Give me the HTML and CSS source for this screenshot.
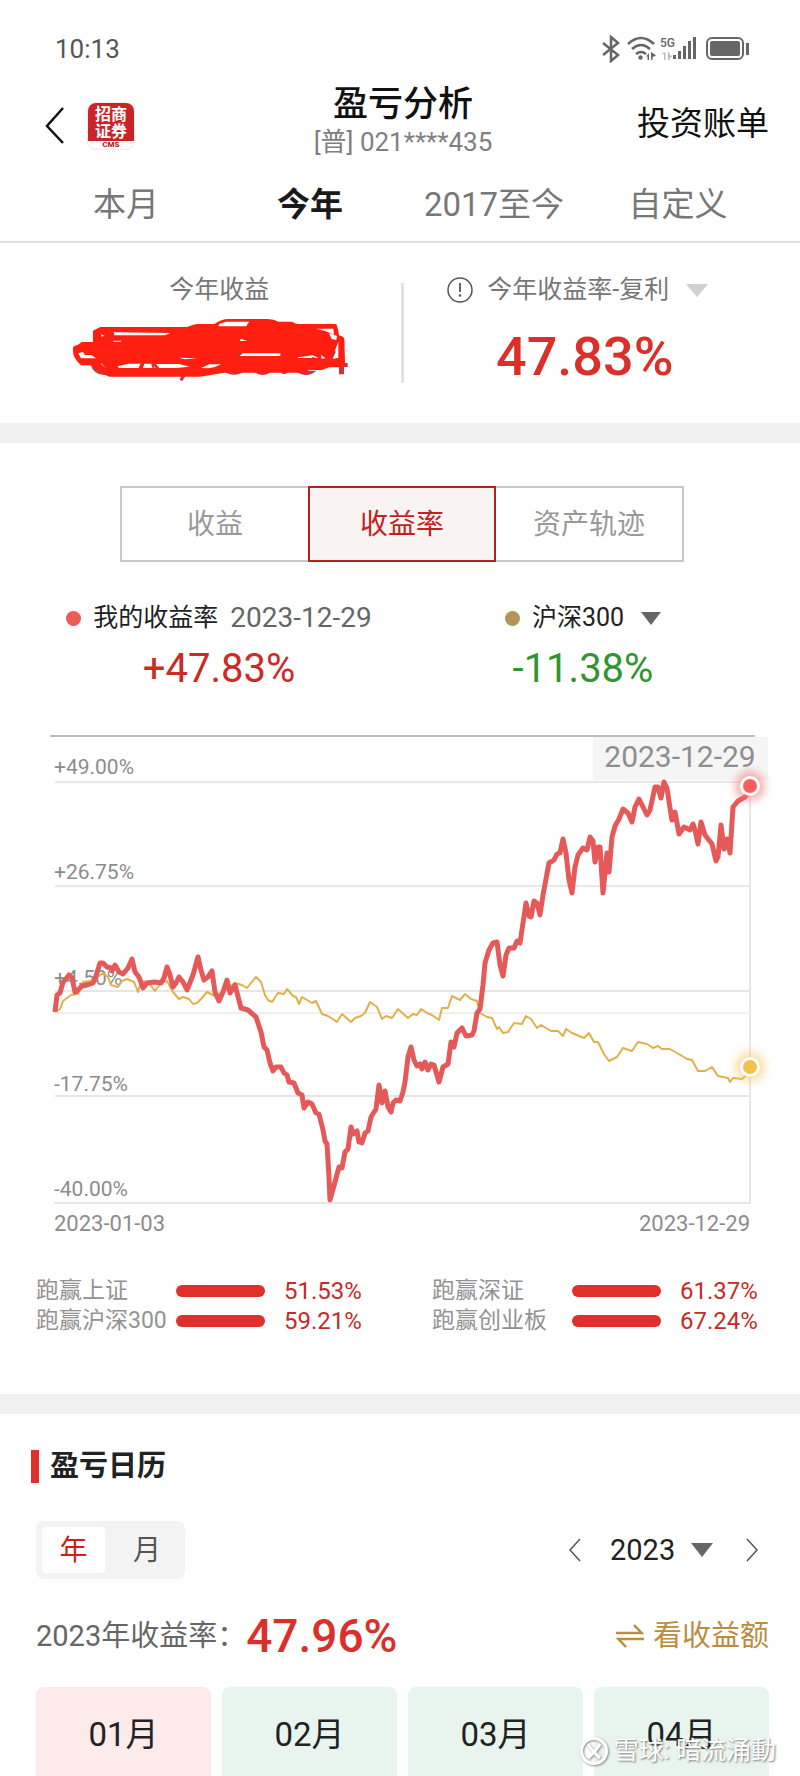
FILE: index.html
```html
<!DOCTYPE html>
<html lang="zh-CN">
<head>
<meta charset="utf-8">
<meta name="viewport" content="width=device-width, initial-scale=1">
<title>盈亏分析</title>
<link rel="stylesheet" href="styles.css">
</head>
<body>
<div class="page">
  <div class="status">
    <span class="status-time">10:13</span>
    <svg class="status-icons" width="150" height="28" viewBox="0 0 150 28" aria-hidden="true">
      <g fill="none" stroke="#666" stroke-width="2">
        <path stroke-width="2.500" d="M1 8l15 12-7 6V2l7 6L1 20"/>
        <path stroke-width="2.500" d="M26 9q13-12 26 0M30 14q9-8 18 0M34 19q5-4 10 0"/>
        <rect x="105" y="3" width="36" height="21" rx="5"/>
      </g>
      <g fill="#666">
        <circle cx="38.500" cy="22.500" r="2.200"/>
        <path d="M47 18v7h-1.500v-4l-2 1zM49 17v8h1.500v-3l3-1v-1l-3-2z"/>
        <rect x="71" y="20" width="3" height="4"/><rect x="76" y="16" width="3" height="8"/><rect x="81" y="11" width="3" height="13"/><rect x="86" y="6" width="3" height="18"/><rect x="91" y="2" width="3" height="22"/>
        <rect x="108" y="6" width="30" height="15" rx="2"/><rect x="144" y="8" width="3" height="12"/>
      </g>
      <path fill="#bbb" d="M62 17v8h1.500v-7zM60 19l2-2v2zM66 17v8h1.500v-2l3-2-3-1v-3z"/>
      <text x="58" y="12" class="net">5G</text>
    </svg>
  </div>

  <header class="header">
    <div class="header-left">
      <button class="back" aria-label="返回"><svg width="20" height="38" viewBox="0 0 20 38"><path d="M18 1L2 19l16 17" fill="none" stroke="#111" stroke-width="2.500"/></svg></button>
      <div class="logo"><span class="logo-name">招商<br>证券</span><span class="logo-code">CMS</span></div>
    </div>
    <div class="header-title">
      <h1>盈亏分析</h1>
      <p>[普] 021****435</p>
    </div>
    <a class="bill" href="#bill">投资账单</a>
  </header>

  <nav class="tabs">
    <button>本月</button><button class="on">今年</button><button>2017至今</button><button>自定义</button>
  </nav>

  <section class="summary">
    <div class="sum-col">
      <div class="sum-label">今年收益</div>
      <svg class="scribble" width="280" height="64" viewBox="210 237 840 192" role="img" aria-label="已涂抹">
        <g fill="#c8353a">
          <path d="M268 375q10 33 42 33l20-10v-25zM666 395q34 24 66 0zM754 395q30 26 60 0zM884 395q32 26 62 0zM840 393h20v8q-10 8-20 0zM1014 372h26v12h-11v22h-15zM543 405h14l-13 21-8-3zM1020 292l9 5v70h-14z"/>
        </g>
        <path fill="#ff1f10" d="M216 328q0-8 14-10l12-9h34v-34l22-11h260q18-8 30-9h52q20-14 38-15h122q20 1 32 8h40l16 7h118q6 14 8 34 16 3 16 14l2 66q0 16-14 16h-34l-20 8h-40l-12 8H670l-72 12H325q-22-8-34-21l-22-13h-29q-14-12-18-22-6-6-6-29z"/>
        <g fill="#fff">
          <path d="M338 280l170 2-16 7H340zM300 286l11 4-9 3zM656 254l20-6h68l-8 14h-84zM945 269h52l2 18-24-10zM984 283l24 8-2 12-14-3zM232 343l14-5 6 10h20l13 10h-45zM335 305h26l-2 3h-22zM720 299l18 7h-22zM535 356l55 2-40 3zM350 382l32-8h38l-5 13h-62zM430 374h24l10 13h-38zM465 375h70l30 8-40 4h-50zM600 387l25-11h35l-18 8-20 4zM712 351l8-8h118v8zM890 355l46-6 16 8h-60zM300 372l16 16-15-12zM1012 308v49l-18 2 10-30zM960 348l14 10-12 1z"/>
        </g>
        <path fill="#a23f3f" d="M413 387l5-13h5l-5 13zM450 374h6l5 13h-6zM704 344l22-3-12 12zM930 353l14 3-4 4zM990 358l12-24 2 5-9 20z"/>
      </svg>
    </div>
    <div class="divider"></div>
    <div class="sum-col">
      <div class="sum-label basis">
        <svg width="26" height="26" viewBox="0 0 26 26" aria-hidden="true"><circle cx="13" cy="13" r="12" fill="none" stroke="#555" stroke-width="1.500"/><path d="M13 6v9" stroke="#555" stroke-width="1.800"/><circle cx="13" cy="18.500" r="1.300" fill="#555"/></svg>
        <select aria-label="收益率口径"><option>今年收益率-复利</option></select>
        <svg width="22" height="13" viewBox="0 0 22 13" aria-hidden="true"><path d="M0 0h22L11 13z" fill="#d0d0d0"/></svg>
      </div>
      <div class="sum-value">47.83%</div>
    </div>
  </section>

  <section class="trend">
    <div class="segments">
      <button>收益</button><button class="on">收益率</button><button>资产轨迹</button>
    </div>
    <div class="legend">
      <div class="legend-col">
        <div class="legend-head"><i class="dot mine"></i><span>我的收益率</span><time>2023-12-29</time></div>
        <div class="legend-value up">+47.83%</div>
      </div>
      <div class="legend-col">
        <div class="legend-head"><i class="dot index"></i><select aria-label="对比指数"><option>沪深300</option></select>
          <svg class="caret" width="20" height="13" viewBox="0 0 20 13" aria-hidden="true"><path d="M0 0h20L10 13z" fill="#666"/></svg></div>
        <div class="legend-value down">-11.38%</div>
      </div>
    </div>

    <svg class="chart" viewBox="0 0 800 520" role="img" aria-label="收益率走势">
      <defs><filter id="glow" x="-50%" y="-50%" width="200%" height="200%"><feGaussianBlur stdDeviation="4"/></filter></defs>
      <path d="M50 16H755" stroke="#bfbfbf" stroke-width="2"/>
      <g stroke="#e6e6e6" stroke-width="2" fill="none">
        <path d="M55 62H750M55 166H750M55 271H750M55 376H750M54 483H750V62"/>
        <path d="M55 293H750" stroke="#f0f0f0"/>
      </g>
      <g class="axis">
        <text x="54" y="54">+49.00%</text><text x="54" y="159">+26.75%</text><text x="54" y="265">+4.50%</text><text x="54" y="371">-17.75%</text><text x="54" y="476">-40.00%</text>
        <text class="date" x="54" y="511">2023-01-03</text><text class="date" x="750" y="511" text-anchor="end">2023-12-29</text>
      </g>
      <rect x="593" y="17" width="175" height="43" fill="#f5f5f5"/>
      <text class="tag" x="680" y="47" text-anchor="middle">2023-12-29</text>
      <path class="line-index" d="M55 292L60 289 63 281 71 275 78 274 83 262 90 261 95 259 99 256 103 253 108 257 111 265 118 267 122 261 127 259 134 262 138 272 141 261 148 262 155 271 161 263 167 261 173 272 179 279 183 277 189 279 193 284 197 283 202 278 207 272 215 276 222 272 235 263 242 265 247 268 251 263 256 257 261 262 265 275 268 280 272 282 278 273 284 274 287 269 293 276 296 277 299 284 302 277 312 283 316 281 322 294 328 296 337 302 342 294 351 302 355 298 361 296 365 293 370 282 377 287 382 299 386 296 392 298 398 289 408 298 413 294 417 295 421 289 427 293 432 295 439 300 442 288 448 288 452 276 460 280 465 274 471 279 477 281 480 293 487 297 492 298 497 309 499 307 503 313 508 312 514 303 522 304 526 296 531 299 537 308 541 305 551 311 558 311 563 316 566 309 572 313 584 318 589 313 594 322 598 322 604 334 609 341 617 337 623 328 632 331 638 322 647 324 653 328 658 326 662 329 670 329 677 333 687 339 692 340 698 351 705 351 712 347 718 356 728 358 730 362 733 358 742 359 750 352"/>
      <path class="line-mine" d="M55 292L57 275 60 273 63 262 66 259 69 255 72 258 75 272 77 271 82 266 87 265 93 263 96 256 100 243 103 243 107 247 111 248 112 251 115 245 119 252 123 254 128 248 132 239 135 252 139 257 143 268 147 263 155 262 161 263 164 258 167 247 170 255 173 267 176 263 179 257 183 262 187 270 193 255 198 237 201 250 204 260 208 257 212 251 215 272 219 281 223 272 227 260 230 273 235 265 241 288 248 290 256 297 261 312 264 327 267 330 270 343 273 351 276 347 281 347 284 353 287 355 289 362 294 363 298 373 302 375 304 388 308 382 312 384 316 393 319 394 323 410 325 421 327 424 329 457 330 480 335 462 339 447 342 448 345 432 348 429 351 407 353 414 357 411 359 422 362 423 365 413 368 411 371 397 376 389 379 365 382 383 385 371 388 387 391 392 393 383 396 380 400 381 403 372 405 362 408 337 411 327 414 340 417 346 420 344 422 349 425 342 428 350 431 344 434 345 439 362 443 347 448 344 451 322 454 327 457 313 462 308 466 316 472 315 474 311 477 293 480 289 483 265 485 243 489 230 493 223 497 222 500 245 503 256 506 235 509 228 514 228 517 221 520 223 523 203 526 183 529 196 531 197 534 181 537 183 540 195 543 175 549 143 554 140 557 134 560 133 563 119 566 133 569 160 572 173 575 147 578 135 583 128 587 130 590 117 593 121 595 142 598 127 600 127 603 173 607 133 609 152 612 117 615 106 619 99 623 89 628 93 632 102 635 87 639 79 643 87 647 95 650 90 655 67 658 67 661 78 664 62 667 68 670 88 672 100 675 92 679 114 684 107 690 110 693 104 695 110 698 124 701 102 705 115 712 124 716 141 718 137 721 105 724 129 727 119 730 133 733 87 738 81 745 77 750 70"/>
      <circle cx="750" cy="66" r="15" fill="#f47a80" opacity=".6" filter="url(#glow)"/><circle cx="750" cy="66" r="10" fill="#fff"/><circle cx="750" cy="66" r="7" fill="#fb5f5d"/>
      <circle cx="750" cy="347" r="15" fill="#f6cb6b" opacity=".6" filter="url(#glow)"/><circle cx="750" cy="347" r="10" fill="#fff"/><circle cx="750" cy="347" r="7" fill="#f2c24d"/>
    </svg>

    <div class="beats">
      <div class="beat"><span>跑赢上证</span><i></i><b>51.53%</b></div>
      <div class="beat"><span>跑赢深证</span><i></i><b>61.37%</b></div>
      <div class="beat"><span>跑赢沪深300</span><i></i><b>59.21%</b></div>
      <div class="beat"><span>跑赢创业板</span><i></i><b>67.24%</b></div>
    </div>
  </section>

  <section class="calendar">
    <h2>盈亏日历</h2>
    <div class="cal-bar">
      <div class="toggle"><button class="on">年</button><button>月</button></div>
      <div class="year">
        <button aria-label="上一年"><svg width="13" height="24" viewBox="0 0 13 24"><path d="M12 1L2 12l10 11" fill="none" stroke="#555" stroke-width="1.500"/></svg></button>
        <div class="year-pick"><select aria-label="年份"><option>2023</option></select>
          <svg width="22" height="14" viewBox="0 0 22 14" aria-hidden="true"><path d="M0 0h22L11 14z" fill="#666"/></svg></div>
        <button aria-label="下一年"><svg width="13" height="24" viewBox="0 0 13 24"><path d="M1 1l10 11L1 23" fill="none" stroke="#555" stroke-width="1.500"/></svg></button>
      </div>
    </div>
    <div class="rate">
      <span class="rate-label">2023年收益率：</span>
      <strong>47.96%</strong>
      <button class="switch"><svg width="28" height="24" viewBox="0 0 28 24" aria-hidden="true"><path d="M0 9h25.500L18 1M28 15H2.500L10 23" fill="none" stroke="#bb8c42" stroke-width="2.500"/></svg>看收益额</button>
    </div>
    <div class="months">
      <div class="month gain">01月</div><div class="month">02月</div><div class="month">03月</div><div class="month">04月</div>
    </div>
  </section>

  <div class="watermark">
    <svg width="32" height="32" viewBox="0 0 32 32" aria-hidden="true"><circle cx="16" cy="16" r="12.500" fill="none" stroke="#fff" stroke-width="3"/><path d="M10 9q4 7 12 14M22 9q-4 7-12 14" fill="none" stroke="#fff" stroke-width="3"/></svg>
    <span>雪球: 暗流涌動</span>
  </div>
</div>
</body>
</html>
```
FILE: styles.css
```css
* { box-sizing: border-box; }

body {
  margin: 0;
  background: #fff;
  color: #222;
  font-family: Roboto, "Noto Sans CJK SC", sans-serif;
}

h1, h2, p { margin: 0; }

button, select {
  margin: 0;
  padding: 0;
  border: 0;
  border-radius: 0;
  background: none;
  color: inherit;
  font: inherit;
  appearance: none;
}

svg { display: block; flex: none; }

.page { position: relative; overflow: hidden; }

/* Status bar */
.status {
  display: flex;
  align-items: center;
  justify-content: space-between;
  height: 80px;
  padding: 18px 48px 0 55px;
}
.status-time { font-size: 26px; color: #555; }
.net { font: 500 12px Roboto, sans-serif; fill: #666; }

/* Header */
.header {
  display: grid;
  grid-template-columns: 1fr auto 1fr;
  align-items: center;
  padding: 0 31px 0 45px;
}
.header-left { display: flex; align-items: center; gap: 22px; padding-top: 14px; }
.logo {
  display: flex;
  flex-direction: column;
  width: 48px;
  height: 48px;
  border: 1px solid #eee;
  border-radius: 9px;
  overflow: hidden;
  background: #fff;
  text-align: center;
}
.logo-name {
  padding-top: 3px;
  height: 39px;
  background: #cb2428;
  color: #fff;
  font-size: 16px;
  font-weight: 700;
  line-height: 17px;
}
.logo-code { color: #b8282c; font-size: 8px; font-weight: 900; line-height: 8px; }
.header-title { margin-right: 8px; text-align: center; }
.header-title h1 { padding-top: 4px; font-size: 35px; font-weight: 500; line-height: 42px; color: #111; }
.header-title p { font-size: 26px; line-height: 32px; color: #808080; }
.bill {
  justify-self: end;
  padding-top: 10px;
  color: #111;
  font-size: 33px;
  line-height: 44px;
  text-decoration: none;
}

/* Period tabs */
.tabs {
  display: grid;
  grid-template-columns: repeat(4, 1fr);
  padding: 11px 30px 0 34px;
  border-bottom: 2px solid #e0e0e0;
}
.tabs button { font-size: 33px; line-height: 72px; color: #777; }
.tabs .on { color: #1a1a1a; font-weight: 700; }

/* Summary */
.summary {
  display: flex;
  align-items: center;
  height: 180px;
  padding: 0 34px 0 38px;
}
.sum-col {
  flex: 1;
  display: flex;
  flex-direction: column;
  align-items: center;
  gap: 11px;
  height: 120px;
}
.sum-label {
  display: flex;
  align-items: center;
  gap: 14px;
  font-size: 25px;
  line-height: 34px;
  color: #777;
}
.basis { padding-right: 14px; }
.basis select + svg { margin-left: 3px; }
.scribble { margin-right: 16px; }
.sum-value { font-size: 54px; font-weight: 500; line-height: 78px; color: #dc2f2a; }
.divider { width: 3px; height: 100px; background: #e2e2e2; }

/* Trend */
.trend { border-top: 20px solid #f1f1f1; padding: 43px 0 58px; }
.segments {
  display: grid;
  grid-template-columns: repeat(3, 1fr);
  margin: 0 116px 0 120px;
}
.segments button {
  height: 76px;
  padding-bottom: 5px;
  border: 2px solid #c8c8c8;
  font-size: 28px;
  color: #999;
}
.segments button:first-child { border-right: 0; }
.segments button:last-child { border-left: 0; }
.segments .on { border-color: #b3221f; background: #faf3f3; color: #c4201c; }

.legend { display: grid; grid-template-columns: 1fr 1fr; margin: 38px 35px 27px 37px; }
.legend-col { display: flex; flex-direction: column; align-items: center; gap: 9px; }
.legend-head {
  display: flex;
  align-items: center;
  gap: 12px;
  font-size: 25px;
  line-height: 36px;
}
.legend-head time { font-size: 28px; color: #666; }
.dot { width: 15px; height: 15px; border-radius: 50%; }
.mine { background: #ea5c5a; }
.index { background: #b5945a; }
.caret { margin-left: 4px; }
.legend-value { font-size: 40px; line-height: 48px; }
.up { color: #cc2a26; }
.down { color: #339433; }

.chart { width: 100%; height: auto; }
.axis { font: 21px Roboto, sans-serif; fill: #8c8c8c; }
.date { font-size: 22px; }
.tag { font: 30px Roboto, sans-serif; fill: #8e8e8e; }
.line-index, .line-mine { fill: none; stroke-linejoin: round; }
.line-index { stroke: #ddb24a; stroke-width: 2; }
.line-mine { stroke: #e55a58; stroke-width: 5; }

.beats { display: grid; grid-template-columns: 1fr 1fr; column-gap: 64px; margin: 36px 36px 0; }
.beat { display: flex; align-items: center; line-height: 30px; }
.beat span { width: 140px; font-size: 23px; color: #939393; white-space: nowrap; }
.beat i { width: 89px; height: 12px; margin-right: 19px; border-radius: 6px; background: #df302b; }
.beat b { font-size: 24px; font-weight: 400; color: #c62b27; }

/* Calendar */
.calendar { border-top: 20px solid #f1f1f1; padding: 36px 31px 0 36px; }
.calendar h2 {
  margin-left: -5px;
  padding-left: 11px;
  border-left: 8px solid #df302b;
  font-size: 29px;
  font-weight: 700;
  line-height: 33px;
}
.cal-bar { display: flex; align-items: center; justify-content: space-between; margin-top: 38px; }
.toggle {
  display: grid;
  grid-template-columns: 63px 1fr;
  column-gap: 10px;
  width: 149px;
  height: 58px;
  padding: 6px;
  border-radius: 8px;
  background: #f3f3f3;
}
.toggle button { padding-bottom: 4px; font-size: 28px; color: #555; }
.toggle .on { border-radius: 4px; background: #fff; color: #c9211d; }
.year { display: flex; align-items: center; gap: 29px; padding-right: 10px; }
.year-pick { display: flex; align-items: center; gap: 15px; font-size: 29px; }
.year-pick + button { margin-left: 4px; }
.rate { display: flex; align-items: center; margin-top: 29px; line-height: 56px; }
.rate-label { font-size: 29px; color: #666; }
.rate strong { font-size: 46px; font-weight: 500; color: #dc2f2a; }
.switch {
  display: flex;
  align-items: center;
  gap: 9px;
  margin-left: auto;
  font-size: 29px;
  color: #bb8c42;
}
.months { display: grid; grid-template-columns: repeat(4, 1fr); gap: 11px; margin-top: 23px; }
.month {
  padding: 25px 0 18px;
  border-radius: 8px 8px 0 0;
  background: #e8f4ee;
  font-size: 33px;
  line-height: 46px;
  text-align: center;
}
.gain { background: #fdeaea; }

.watermark {
  position: absolute;
  right: 24px;
  bottom: 8px;
  display: flex;
  align-items: center;
  gap: 4px;
  color: #fff;
  font-size: 25px;
  line-height: 34px;
  text-shadow: 1px 1px 2px #777;
}
.watermark svg { filter: drop-shadow(1px 1px 1px #888); }
```
